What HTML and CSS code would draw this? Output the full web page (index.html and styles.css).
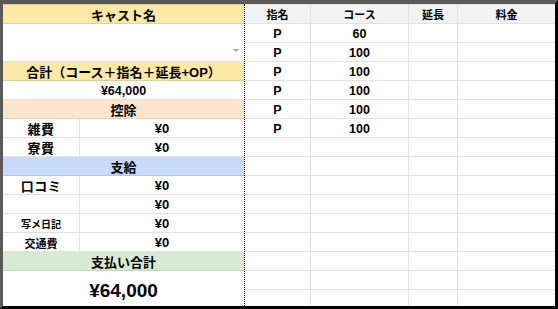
FILE: index.html
```html
<!DOCTYPE html>
<html lang="ja">
<head>
<meta charset="utf-8">
<link rel="stylesheet" href="styles.css">
</head>
<body>
<div class="frame">
  <div class="left">
    <div class="band yellow head">キャスト名</div>
    <div class="input"><span class="arrow"></span></div>
    <div class="band yellow">合計（コース＋指名＋延長+OP）</div>
    <div class="full num">¥64,000</div>
    <div class="band orange">控除</div>
    <div class="lab">雑費</div><div class="val">¥0</div>
    <div class="lab">寮費</div><div class="val">¥0</div>
    <div class="band blue">支給</div>
    <div class="lab">口コミ</div><div class="val">¥0</div>
    <div class="lab"></div><div class="val">¥0</div>
    <div class="lab small">写メ日記</div><div class="val">¥0</div>
    <div class="lab mid">交通費</div><div class="val">¥0</div>
    <div class="band green">支払い合計</div>
    <div class="total">¥64,000</div>
  </div>
  <div class="divider"></div>
  <div class="right">
    <div class="th">指名</div><div class="th">コース</div><div class="th">延長</div><div class="th">料金</div>
    <div class="td">P</div><div class="td">60</div><div class="td"></div><div class="td"></div>
    <div class="td">P</div><div class="td">100</div><div class="td"></div><div class="td"></div>
    <div class="td">P</div><div class="td">100</div><div class="td"></div><div class="td"></div>
    <div class="td">P</div><div class="td">100</div><div class="td"></div><div class="td"></div>
    <div class="td">P</div><div class="td">100</div><div class="td"></div><div class="td"></div>
    <div class="td">P</div><div class="td">100</div><div class="td"></div><div class="td"></div>
    <div class="td"></div><div class="td"></div><div class="td"></div><div class="td"></div>
    <div class="td"></div><div class="td"></div><div class="td"></div><div class="td"></div>
    <div class="td"></div><div class="td"></div><div class="td"></div><div class="td"></div>
    <div class="td"></div><div class="td"></div><div class="td"></div><div class="td"></div>
    <div class="td"></div><div class="td"></div><div class="td"></div><div class="td"></div>
    <div class="td"></div><div class="td"></div><div class="td"></div><div class="td"></div>
    <div class="td"></div><div class="td"></div><div class="td"></div><div class="td"></div>
    <div class="td"></div><div class="td"></div><div class="td"></div><div class="td"></div>
    <div class="td last"></div><div class="td last"></div><div class="td last"></div><div class="td last"></div>
  </div>
</div>
</body>
</html>
```

FILE: styles.css
```css
* { box-sizing: border-box; }
html, body { margin: 0; padding: 0; background: #fff; }
body {
  width: 558px;
  height: 309px;
  overflow: hidden;
  font-family: "Liberation Sans", "Noto Sans CJK JP", sans-serif;
  font-weight: bold;
  color: #000;
}
.frame {
  width: 558px;
  height: 309px;
  border-top: 4px solid #5a5a5a;
  border-left: 3px solid #5a5a5a;
  border-right: 3px solid #000;
  border-bottom: 3px solid #000;
  display: flex;
}
.left {
  width: 241px;
  display: grid;
  grid-template-columns: 77px 164px;
  grid-template-rows: 20px 38px repeat(11, 19px) 35px;
}
.divider {
  width: 1px;
  border-left: 1px dotted #000;
}
.right {
  width: 310px;
  display: grid;
  grid-template-columns: 66px 98px 49px 97px;
  grid-template-rows: 20px repeat(14, 19px) 16px;
}
.band {
  grid-column: 1 / span 2;
  display: flex;
  align-items: center;
  justify-content: center;
  font-size: 13px;
  border-bottom: 1px solid rgba(0,0,0,0.1);
  padding-top: 1px;
}
.head { border-top: 1px solid rgba(0,0,0,0.12); }
.yellow { background: #fde8a8; }
.orange { background: #fce5cd; }
.blue { background: #c9daf8; }
.green { background: #d9ead3; }
.input {
  grid-column: 1 / span 2;
  position: relative;
  border-bottom: 1px solid #e2e2e2;
}
.arrow {
  position: absolute;
  right: 5px;
  top: 25px;
  width: 0;
  height: 0;
  border-left: 3px solid transparent;
  border-right: 3px solid transparent;
  border-top: 3px solid #a0a0a0;
}
.full {
  grid-column: 1 / span 2;
  display: flex;
  align-items: center;
  justify-content: center;
  border-bottom: 1px solid #e2e2e2;
}
.num { font-size: 12.5px; padding-top: 1px; }
.lab, .val {
  display: flex;
  align-items: center;
  justify-content: center;
  border-bottom: 1px solid #e2e2e2;
  font-size: 13px;
  padding-top: 1px;
}
.lab {
  border-right: 1px solid #e2e2e2;
  font-size: 13px;
  letter-spacing: 0.5px;
}
.lab.small { font-size: 10px; letter-spacing: 0; }
.lab.mid { font-size: 11px; letter-spacing: 0; }
.total {
  grid-column: 1 / span 2;
  display: flex;
  align-items: center;
  justify-content: center;
  font-size: 19px;
  padding-top: 4px;
}
.th, .td {
  display: flex;
  align-items: center;
  justify-content: center;
  border-right: 1px solid #e2e2e2;
  border-bottom: 1px solid #e2e2e2;
}
.th {
  background: #f3f3f3;
  font-size: 11px;
  border-top: 1px solid #e8e8e8;
}
.td { font-size: 12.5px; padding-top: 1px; }
.td.last { border-bottom: none; }
.th:nth-child(4n), .td:nth-child(4n) { border-right: none; }
```
